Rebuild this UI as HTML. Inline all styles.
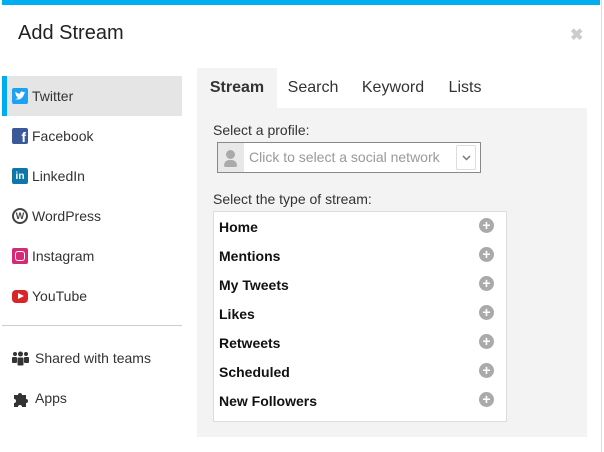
<!DOCTYPE html>
<html><head><style>
*{margin:0;padding:0;box-sizing:border-box}
body{width:604px;height:452px;background:#fff;font-family:"Liberation Sans",sans-serif;position:relative;overflow:hidden;color:#333}
svg{display:block}
.a{position:absolute}
.modal{left:2px;top:0;width:600px;height:452px;background:#fff;border-right:1px solid #ddd}
.bar{left:2px;top:0;width:598px;height:5px;background:#00aeef}
h1{position:absolute;left:18px;top:22px;font-size:20px;font-weight:normal;color:#222}
.nav{left:2px;width:180px;height:40px;font-size:14px;line-height:40px;padding-left:30px;color:#333}
.ic{position:absolute;left:10px;top:12px;width:16px;height:16px;border-radius:2px;line-height:normal}
.tab{top:68px;height:40px;line-height:40px;font-size:16px;color:#333;text-align:center}
.panel{left:197px;top:108px;width:390px;height:329px;background:#f3f3f3}
.lbl{font-size:14px;color:#333}
.row{left:219px;font-size:14px;font-weight:bold;color:#111}
.plus{left:479px;width:15px;height:15px;border-radius:50%;background:#aaa;color:#fff;font-size:14px;line-height:15px;text-align:center;font-weight:bold}
</style></head><body>
<div class="a modal"></div>
<div class="a bar"></div>
<h1>Add Stream</h1>
<div class="a" style="left:570px;top:25px;color:#ccc;font-size:16px;font-weight:bold">✖</div>

<div class="a nav" style="top:76px;background:#e5e5e5"><div class="a" style="left:0;top:0;width:5px;height:40px;background:#00aeef"></div><div class="ic" style="background:#1da1f2"><svg width="16" height="16" viewBox="0 0 16 16"><path d="M3 11 C6 12.5 11 11 12 6 L13.5 4.5 L12 4.8 L12.8 3.6 L11.3 4.1 C10 2.8 7.8 3.8 8.1 5.8 C6.2 5.7 4.6 4.8 3.6 3.6 C3 4.8 3.5 6 4.4 6.6 L3.6 6.4 C3.7 7.6 4.5 8.3 5.4 8.5 L4.6 8.6 C4.9 9.4 5.6 9.9 6.5 9.9 C5.5 10.7 4.2 11 3 11 Z" fill="#fff"/></svg></div>Twitter</div>
<div class="a nav" style="top:116px"><div class="ic" style="background:#3b5998;color:#fff;font-weight:bold;font-size:14px;line-height:18px;text-align:right;padding-right:2px">f</div>Facebook</div>
<div class="a nav" style="top:156px"><div class="ic" style="background:#0e76a8;color:#fff;font-weight:bold;font-size:10px;line-height:18px;text-align:center">in</div>LinkedIn</div>
<div class="a nav" style="top:196px"><div class="ic" style="border:2px solid #444;border-radius:50%;color:#444;font-size:9px;font-weight:bold;line-height:12px;text-align:center">W</div>WordPress</div>
<div class="a nav" style="top:236px"><div class="ic" style="background:#d62976"><div style="position:absolute;left:3px;top:3px;width:10px;height:10px;border:1.5px solid #fff;border-radius:3px"></div></div>Instagram</div>
<div class="a nav" style="top:276px"><div class="ic" style="background:#d9252a;border-radius:4px;top:14px;height:13px"><div style="position:absolute;left:6px;top:3px;border-left:6px solid #fff;border-top:3.5px solid transparent;border-bottom:3.5px solid transparent"></div></div>YouTube</div>
<div class="a" style="left:2px;top:325px;width:180px;height:1px;background:#ccc"></div>
<div class="a nav" style="top:338px;padding-left:33px"><svg class="a" style="left:10px;top:13px" width="17" height="15" viewBox="0 0 17 15" fill="#333"><circle cx="3" cy="3" r="2"/><circle cx="14" cy="3" r="2"/><circle cx="8.5" cy="3" r="2.5"/><rect x="0" y="6" width="5" height="6" rx="1"/><rect x="12" y="6" width="5" height="6" rx="1"/><rect x="5.5" y="6.5" width="6" height="8" rx="1"/></svg>Shared with teams</div>
<div class="a nav" style="top:378px;padding-left:33px"><svg class="a" style="left:10px;top:13px" width="17" height="17" viewBox="0 0 17 17" fill="#333"><path d="M2 4h4a2 2 0 1 1 4 0h4v4a2 2 0 1 1 0 4v4H10a2 2 0 1 0-4 0H2v-4a2 2 0 1 0 0-4z"/></svg>Apps</div>

<div class="a" style="left:197px;top:68px;width:80px;height:40px;background:#f3f3f3"></div>
<div class="a tab" style="left:197px;width:80px;font-weight:bold">Stream</div>
<div class="a tab" style="left:277px;width:72px">Search</div>
<div class="a tab" style="left:352px;width:82px">Keyword</div>
<div class="a tab" style="left:440px;width:50px">Lists</div>
<div class="a panel"></div>
<div class="a lbl" style="left:213px;top:122px">Select a profile:</div>
<div class="a" style="left:217px;top:142px;width:264px;height:31px;border:1px solid #888;background:#fff">
 <div class="a" style="left:0;top:0;width:26px;height:29px;background:#e8e8e8"><div class="a" style="left:8px;top:7px;width:9px;height:9px;border-radius:50%;background:#aaa"></div><div class="a" style="left:6px;top:17px;width:13px;height:7px;border-radius:6px 6px 2px 2px;background:#aaa"></div></div>
 <div class="a" style="left:31px;top:6px;font-size:14px;color:#999">Click to select a social network</div>
 <div class="a" style="left:238px;top:2px;width:20px;height:25px;border:1px solid #ddd;border-radius:2px"><svg class="a" style="left:5px;top:9px" width="9" height="6" viewBox="0 0 9 6"><path d="M1 1l3.5 3.5L8 1" stroke="#777" stroke-width="1.5" fill="none"/></svg></div>
</div>
<div class="a lbl" style="left:213px;top:191px">Select the type of stream:</div>
<div class="a" style="left:213px;top:211px;width:294px;height:211px;background:#fff;border:1px solid #ddd"></div>
<div class="a row" style="top:219px">Home</div><div class="a plus" style="top:218px">+</div>
<div class="a row" style="top:248px">Mentions</div><div class="a plus" style="top:247px">+</div>
<div class="a row" style="top:277px">My Tweets</div><div class="a plus" style="top:276px">+</div>
<div class="a row" style="top:306px">Likes</div><div class="a plus" style="top:305px">+</div>
<div class="a row" style="top:335px">Retweets</div><div class="a plus" style="top:334px">+</div>
<div class="a row" style="top:364px">Scheduled</div><div class="a plus" style="top:363px">+</div>
<div class="a row" style="top:393px">New Followers</div><div class="a plus" style="top:392px">+</div>
</body></html>
